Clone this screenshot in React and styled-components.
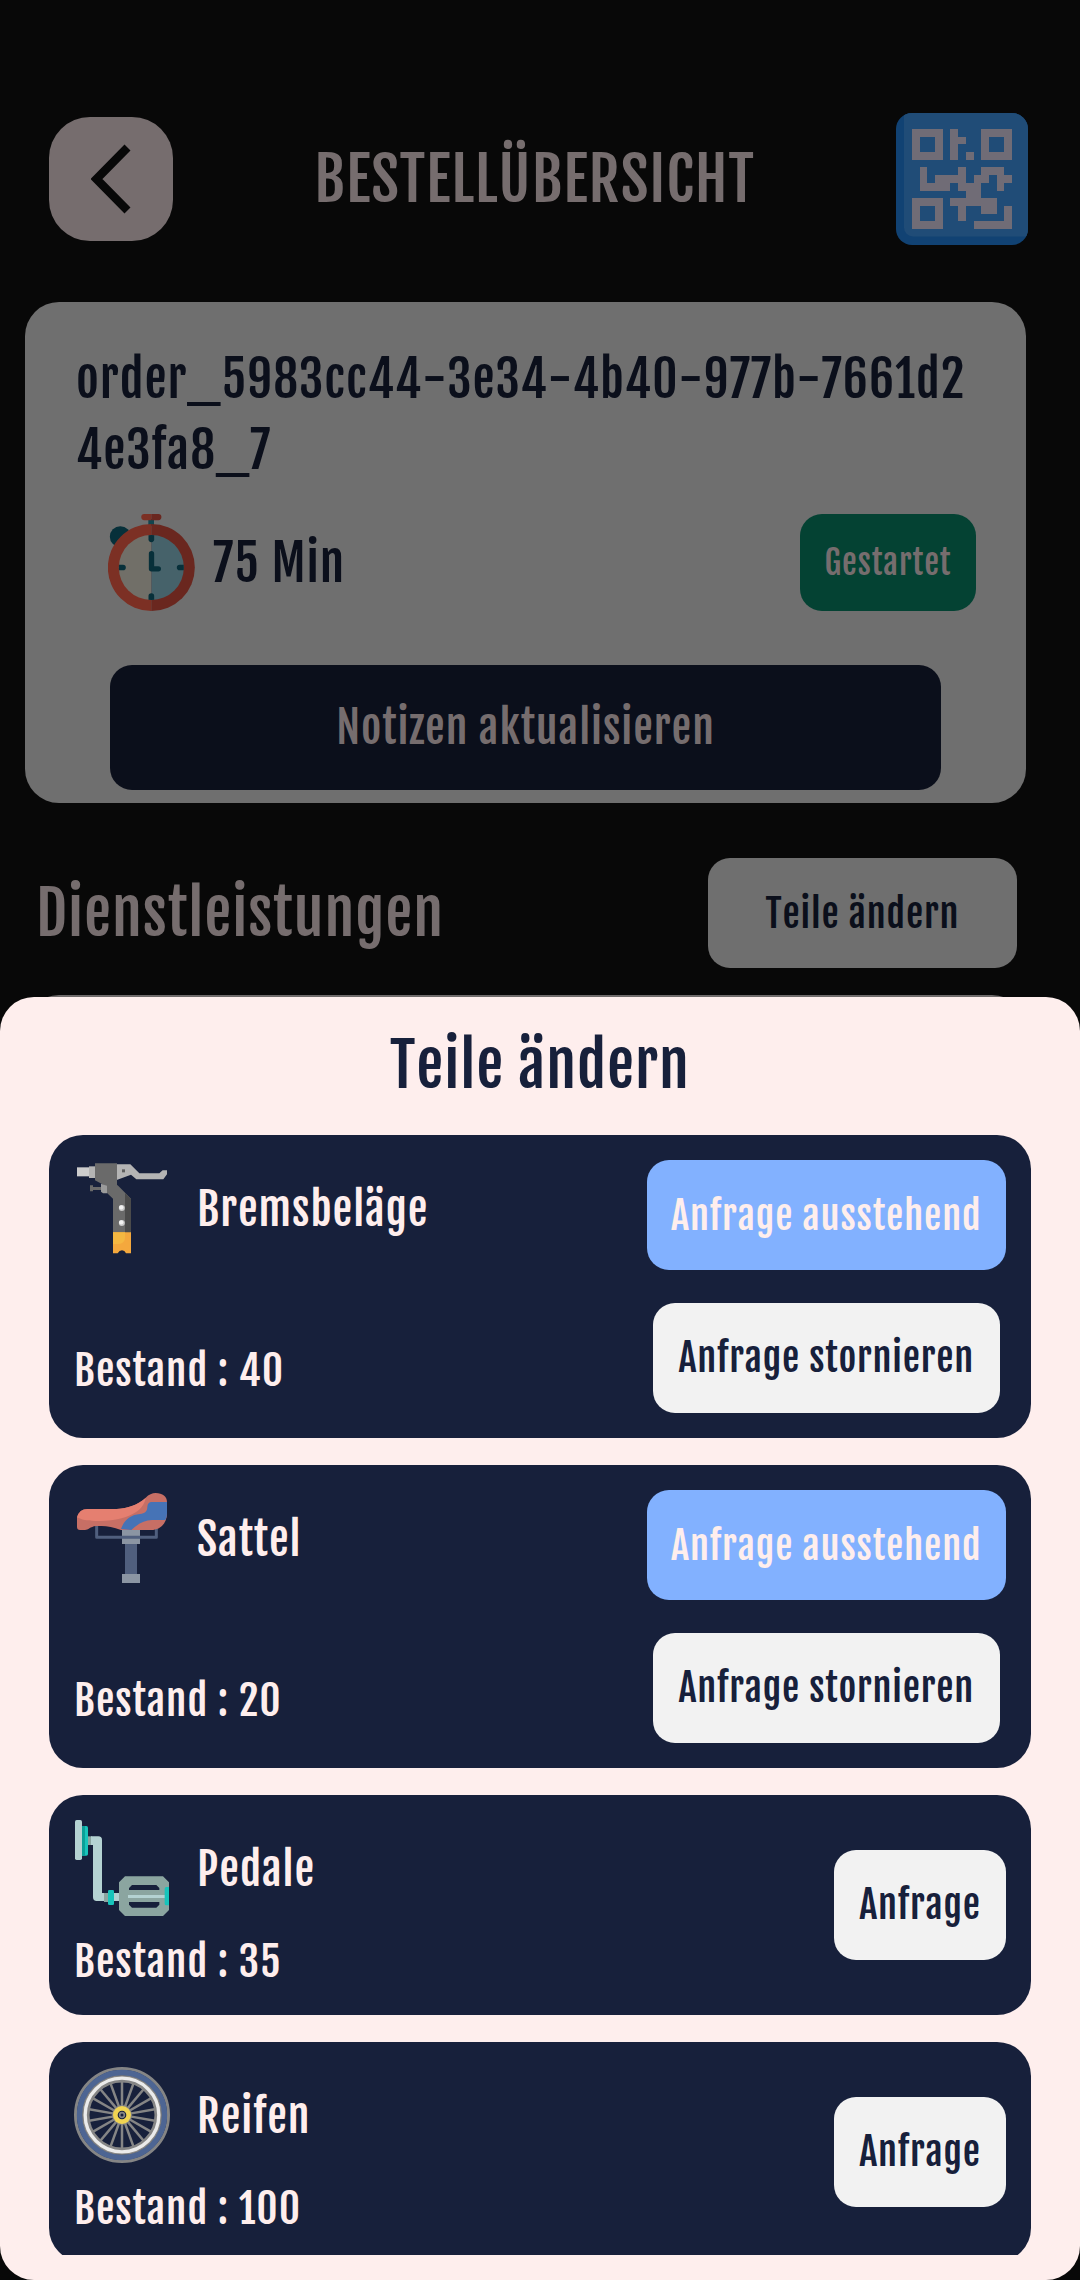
import React from 'react';
import styled, { createGlobalStyle } from 'styled-components';

const GlobalStyle = createGlobalStyle`
  * { box-sizing: border-box; }
  body {
    margin: 0;
    background: #080808;
    font-family: "Fjalla One", "Roboto Condensed", Roboto, sans-serif;
    font-weight: 400;
    font-kerning: none;
    letter-spacing: 0.95px;
  }
  button {
    font-kerning: none;
  }
`;

const Screen = styled.div`
  position: relative;
  width: 1080px;
  height: 2280px;
  overflow: hidden;
  background: #080808;
`;

const Header = styled.header`
  display: flex;
  align-items: center;
  justify-content: space-between;
  height: 245px;
  padding: 113px 52px 0 49px;
`;

const BackButton = styled.button`
  display: flex;
  align-items: center;
  justify-content: center;
  width: 124px;
  height: 124px;
  padding: 0;
  border: 0;
  border-radius: 41px;
  background: #766d6e;
`;

const Title = styled.h1`
  margin: 0;
  color: #766d6e;
  font-size: 60.5px;
  font-weight: 400;
  line-height: 76px;
`;

const OrderCard = styled.section`
  width: 1001px;
  height: 501px;
  margin: 57px 0 0 25px;
  padding-top: 42px;
  border-radius: 34px;
  background: #6f6f6f;
  color: #0b0f1b;
`;

const OrderId = styled.div`
  width: 895px;
  margin-left: 51px;
  font-size: 49.5px;
  line-height: 71px;
  word-break: break-all;
`;

const OrderMeta = styled.div`
  display: flex;
  align-items: center;
  height: 97px;
  margin: 28px 50px 0 83px;
`;

const Duration = styled.span`
  flex: 1;
  margin-left: 18px;
  font-size: 49.5px;
`;

const StatusChip = styled.span`
  display: flex;
  align-items: center;
  justify-content: center;
  width: 176px;
  height: 97px;
  border-radius: 22px;
  background: #044233;
  color: #766d6e;
  font-size: 33px;
`;

const NotesButton = styled.button`
  display: block;
  width: 831px;
  height: 125px;
  margin: 54px 0 0 85px;
  padding: 0;
  border: 0;
  border-radius: 22px;
  background: #0b0f1b;
  color: #766d6e;
  font-family: inherit;
  font-size: 44px;
  letter-spacing: 0.95px;
`;

const ServicesBar = styled.div`
  display: flex;
  align-items: center;
  justify-content: space-between;
  height: 110px;
  margin: 55px 63px 0 36px;
`;

const ServicesTitle = styled.h2`
  margin: 0;
  color: #766d6e;
  font-size: 60.5px;
  font-weight: 400;
  line-height: 76px;
`;

const ChangePartsButton = styled.button`
  width: 309px;
  height: 110px;
  padding: 0;
  border: 0;
  border-radius: 22px;
  background: #6f6f6f;
  color: #0b0f1b;
  font-family: inherit;
  font-size: 38.5px;
  letter-spacing: 0.85px;
`;

const ServiceCard = styled.div`
  width: 1001px;
  height: 120px;
  margin: 27px 0 0 25px;
  border-radius: 34px;
  background: #6f6b6b;
`;

const Sheet = styled.div`
  position: absolute;
  left: 0;
  right: 0;
  bottom: 0;
  height: 1283px;
  padding: 30px 49px 25px;
  border-radius: 34px;
  background: #feeeed;
  display: flex;
  flex-direction: column;
`;

const SheetTitle = styled.h2`
  margin: 0 0 32px;
  color: #17203b;
  font-size: 60.5px;
  font-weight: 400;
  line-height: 76px;
  text-align: center;
`;

const PartList = styled.div`
  flex: 1;
  display: flex;
  flex-direction: column;
  gap: 27.5px;
  overflow: hidden;
`;

const PartCard = styled.article`
  flex: none;
  display: flex;
  justify-content: space-between;
  height: ${(p) => (p.$pending ? 302.5 : 219.5)}px;
  padding: 25px;
  border-radius: 34px;
  background: #17203b;
  color: #feeeed;
`;

const PartInfo = styled.div`
  display: flex;
  flex-direction: column;
  justify-content: space-between;
  padding-bottom: ${(p) => (p.$pending ? 17 : 2.5)}px;
`;

const PartHead = styled.div`
  display: flex;
  align-items: center;
  gap: 27px;
  font-size: 44px;
`;

const PartName = styled.span`
  padding-top: 3px;
`;

const Stock = styled.div`
  font-size: 41.25px;
  line-height: 52px;
`;

const Actions = styled.div`
  display: flex;
  flex-direction: column;
  align-items: center;
  justify-content: center;
  gap: 32.5px;
`;

const Badge = styled.span`
  display: flex;
  align-items: center;
  justify-content: center;
  width: 359.5px;
  height: 110px;
  border-radius: 22px;
  background: #82b1ff;
  color: #feeeed;
  font-size: 38.5px;
  letter-spacing: 0.9px;
`;

const RequestButton = styled.button`
  width: ${(p) => p.$w}px;
  height: 110px;
  padding: 0;
  border: 0;
  border-radius: 22px;
  background: #f2f2f2;
  color: #17203b;
  font-family: inherit;
  font-size: 38.5px;
  letter-spacing: 0.8px;
  white-space: nowrap;
`;

const Icon = styled.svg`
  display: block;
  flex: none;
  width: ${(p) => p.$w}px;
  height: ${(p) => p.$h}px;
`;

const QR_MODULES = [
  '1111010001111',
  '1001011001001',
  '1001010001001',
  '1111010101111',
  '0000000000000',
  '0100001001110',
  '0101111011011',
  '0111101110010',
  '0000000110000',
  '1111011111100',
  '1001001001101',
  '1001001000001',
  '1111000011111',
];

const QR_MODULE = 7.69;

const QrIcon = () => (
  <Icon $w={132} $h={132} viewBox="0 0 132 132">
    <defs>
      <clipPath id="qrFace">
        <rect width="132" height="132" rx="16" />
      </clipPath>
    </defs>
    <rect width="132" height="132" rx="16" fill="#114273" />
    <g clipPath="url(#qrFace)">
      <rect x="8" y="-10" width="140" height="133.500" rx="9" fill="#204c77" />
    </g>
    <g fill="#706c76" shapeRendering="crispEdges">
      {QR_MODULES.flatMap((row, y) =>
        [...row].map((cell, x) =>
          cell === '1' ? (
            <rect
              key={`${x}-${y}`}
              x={16 + x * QR_MODULE}
              y={16 + y * QR_MODULE}
              width={QR_MODULE}
              height={QR_MODULE}
            />
          ) : null
        )
      )}
    </g>
  </Icon>
);

const ChevronIcon = () => (
  <Icon $w={40} $h={70} viewBox="0 0 40 70">
    <path d="M36.500 3.500 L5.500 35 L36.500 66.500" fill="none" stroke="#080808" strokeWidth="8.4" />
  </Icon>
);

const StopwatchIcon = () => (
  <Icon $w={87} $h={97} viewBox="54 41 261 291">
    <circle cx="91" cy="109" r="31.5" fill="#07303a" />
    <rect x="175" y="56" width="17" height="20" fill="#11454f" />
    <path d="M184 41h-21a9 9 0 0 0 0 18.500h21z" fill="#7c3024" />
    <path d="M184 41h21a9 9 0 0 1 0 18.500h-21z" fill="#6a271f" />
    <path d="M184 71a130.500 130.500 0 0 0 0 261z" fill="#7c3024" />
    <path d="M184 71a130.500 130.500 0 0 1 0 261z" fill="#6a271f" />
    <path d="M184 104a97.500 97.500 0 0 0 0 195z" fill="#716f68" />
    <path d="M184 104a97.500 97.500 0 0 1 0 195z" fill="#46626a" />
    <g fill="#07303a">
      <path d="M175.500 104.500a97 97 0 0 1 17 0V117a8.500 8.500 0 0 1-17 0z" />
      <path d="M175.500 298.500a97 97 0 0 0 17 0V287a8.500 8.500 0 0 0-17 0z" />
      <path d="M87 193a97 97 0 0 0 0 17h12a8.500 8.500 0 0 0 0-17z" />
      <path d="M281 193a97 97 0 0 1 0 17h-12a8.500 8.500 0 0 1 0-17z" />
      <path d="M176.500 160a8 8 0 0 1 16 0v37.500h12.500a8 8 0 0 1 0 16h-20.500a8 8 0 0 1-8-8z" />
    </g>
  </Icon>
);

const BrakeIcon = () => (
  <Icon $w={96} $h={96} viewBox="42 44 288 288">
    <rect x="51" y="66" width="38" height="27" fill="#cdcdcd" />
    <rect x="87" y="63" width="19" height="35" fill="#b4b4b4" />
    <path d="M170 57h41l27 27h60l10-9h13v12l-11 15h-81l-16-14-43 16z" fill="#b4b4b4" />
    <path d="M141 114 L173 120 L213 160 V262 H159 V160 L141 143z" fill="#6a6a6a" />
    <path d="M195 143 L213 160 V262 H195z" fill="#4b4b4b" />
    <path d="M105 54h66v68h-34l-32-17z" fill="#6a6a6a" />
    <path d="M123 115l18 6v23h-12l-6-5z" fill="#9b9b9b" />
    <path d="M90 120h9v5h24v9H99v4h-9z" fill="#6a6a6a" />
    <rect x="186" y="72" width="9" height="9" fill="#5f5f5f" />
    <circle cx="185.500" cy="188" r="9" fill="#c9c9c9" />
    <circle cx="183.500" cy="186" r="6.500" fill="#f2f2f2" />
    <circle cx="185.500" cy="233" r="9" fill="#c9c9c9" />
    <circle cx="183.500" cy="231" r="6.500" fill="#f2f2f2" />
    <path d="M159 261h54v63h-15q-4-9-12-9t-13 9h-14z" fill="#f4a83d" />
    <path d="M159 261h36v15q0 20-20 20h-16z" fill="#f5b841" />
  </Icon>
);

const SaddleIcon = () => (
  <Icon $w={96} $h={96} viewBox="42 30 288 288">
    <rect x="195" y="190" width="36" height="94" fill="#505f7e" />
    <rect x="186" y="146" width="54" height="46" fill="#8b95a3" />
    <rect x="186" y="282" width="54" height="27" fill="#8b95a3" />
    <path d="M110 134v38h179v-34" fill="none" stroke="#505f7e" strokeWidth="9" strokeLinejoin="round" />
    <path
      d="M51 112Q58 87 83 87H170C205 84 231 76 257 53Q271 39 287 39C308 39 321 50 321 66V100C321 130 301 150 274 150H183Q150 138 125 138H108C90 140 85 150 75 150H60Q51 150 51 141z"
      fill="#c76f65"
    />
    <path
      d="M51 112Q58 87 83 87H170C205 84 231 76 257 54C253 76 240 91 218 102C190 118 150 123 105 123C80 123 65 119 51 112z"
      fill="#e57f70"
    />
    <path
      d="M321 66H273Q263 68 262 80C262 95 254 100 240 102C212 104 192 120 183 147L214 150C231 134 252 120 276 120H316Q321 112 321 100z"
      fill="#4673b6"
    />
  </Icon>
);

const PedalIcon = () => (
  <Icon $w={96} $h={96} viewBox="42 30 288 288">
    <rect x="45" y="30" width="21" height="120" rx="5" fill="#b4d2d2" />
    <path d="M66 48h13q5 0 5 5v79q0 5-5 5H66z" fill="#18c4bb" />
    <rect x="66" y="48" width="9" height="89" fill="#0b9f97" />
    <rect x="84" y="79" width="12" height="26" fill="#8ba5a0" />
    <path d="M93 79h22q11 0 11 11v159h52v24h-68q-11 0-11-11V105h-6z" fill="#b4d2d2" />
    <rect x="132" y="249" width="12" height="27" fill="#8ba5a0" />
    <rect x="144" y="240" width="18" height="45" rx="4" fill="#18c4bb" />
    <path
      fillRule="evenodd"
      d="M195 199H309L327 217V300L309 318H195L177 300V217zM216 225L207 234V240H298V234L289 225zM207 276V284L216 293H289L298 284V276z"
      fill="#8ba5a0"
    />
    <rect x="204" y="255" width="112" height="9" fill="#b4d2d2" />
    <path d="M327 231h-8q-5 0-5 5v45q0 5 5 5h8z" fill="#18c4bb" />
  </Icon>
);

const SPOKES = Array.from({ length: 18 }, (_, i) => i * 20);

const WheelIcon = () => (
  <Icon $w={96} $h={96} viewBox="-144 -144 288 288">
    <circle r="139.500" fill="none" stroke="#858585" strokeWidth="9" />
    <circle r="127" fill="none" stroke="#4d6593" strokeWidth="17" />
    <circle r="108.500" fill="none" stroke="#858585" strokeWidth="22" />
    <circle r="110.500" fill="none" stroke="#ebebeb" strokeWidth="10" />
    {SPOKES.map((angle) => (
      <line key={angle} y1="-24" y2="-100" stroke="#858585" strokeWidth="7.500" transform={`rotate(${angle})`} />
    ))}
    <circle r="30" fill="#858585" />
    <circle r="27" fill="#f0d452" />
    <circle r="13" fill="#17203b" />
    <circle r="7" fill="none" stroke="#858585" strokeWidth="5" />
  </Icon>
);

const PARTS = [
  { name: 'Bremsbeläge', stock: 40, pending: true, Glyph: BrakeIcon },
  { name: 'Sattel', stock: 20, pending: true, Glyph: SaddleIcon },
  { name: 'Pedale', stock: 35, pending: false, Glyph: PedalIcon },
  { name: 'Reifen', stock: 100, pending: false, Glyph: WheelIcon },
];

const Part = ({ name, stock, pending, Glyph }) => (
  <PartCard $pending={pending}>
    <PartInfo $pending={pending}>
      <PartHead>
        <Glyph />
        <PartName>{name}</PartName>
      </PartHead>
      <Stock>Bestand : {stock}</Stock>
    </PartInfo>
    <Actions>
      {pending ? (
        <>
          <Badge>Anfrage ausstehend</Badge>
          <RequestButton $w={347}>Anfrage stornieren</RequestButton>
        </>
      ) : (
        <RequestButton $w={172}>Anfrage</RequestButton>
      )}
    </Actions>
  </PartCard>
);

export default function App() {
  return (
    <Screen>
      <GlobalStyle />
      <Header>
        <BackButton aria-label="Zurück">
          <ChevronIcon />
        </BackButton>
        <Title>BESTELLÜBERSICHT</Title>
        <QrIcon />
      </Header>
      <OrderCard>
        <OrderId>order_5983cc44-3e34-4b40-977b-7661d24e3fa8_7</OrderId>
        <OrderMeta>
          <StopwatchIcon />
          <Duration>75 Min</Duration>
          <StatusChip>Gestartet</StatusChip>
        </OrderMeta>
        <NotesButton>Notizen aktualisieren</NotesButton>
      </OrderCard>
      <ServicesBar>
        <ServicesTitle>Dienstleistungen</ServicesTitle>
        <ChangePartsButton>Teile ändern</ChangePartsButton>
      </ServicesBar>
      <ServiceCard />
      <Sheet>
        <SheetTitle>Teile ändern</SheetTitle>
        <PartList>
          {PARTS.map((part) => (
            <Part key={part.name} {...part} />
          ))}
        </PartList>
      </Sheet>
    </Screen>
  );
}
